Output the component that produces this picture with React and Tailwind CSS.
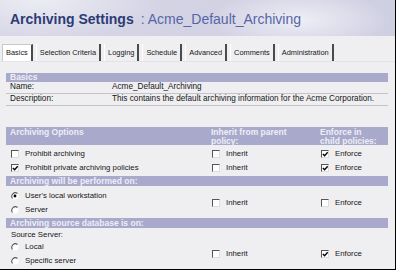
import React from 'react';

const Check = ({ on }) => (
  <span className="inline-block w-[8px] h-[8px] bg-white border-t border-l border-t-[#555] border-l-[#555] border-b border-r border-b-[#ddd] border-r-[#ddd] relative shrink-0">
    {on && (
      <svg viewBox="0 0 8 8" className="absolute left-0 top-0 w-[7px] h-[7px]">
        <path d="M1 3.5 L3 5.5 L6.5 1.5" stroke="#000" strokeWidth="1.6" fill="none" />
      </svg>
    )}
  </span>
);

const Radio = ({ on }) => (
  <svg viewBox="0 0 9 9" className="w-[8px] h-[8px] shrink-0">
    <circle cx="4.5" cy="4.5" r="4" fill="#fff" />
    <path d="M7.3 1.7 A4 4 0 0 0 1.7 7.3" stroke="#555" strokeWidth="1.2" fill="none" />
    {on && <circle cx="4.5" cy="4.5" r="1.6" fill="#000" />}
  </svg>
);

const Bar = ({ children, className = '' }) => (
  <div className={`bg-[#a9a9cc] text-[#eeeef6] font-bold text-[8.5px] leading-none pl-[4px] flex items-center ${className}`}>
    {children}
  </div>
);

const Opt = ({ children, kind = 'check', on, className = '' }) => (
  <div className={`flex items-center gap-[6px] ${className}`}>
    {kind === 'check' ? <Check on={on} /> : <Radio on={on} />}
    <span>{children}</span>
  </div>
);

const tabs = ['Basics', 'Selection Criteria', 'Logging', 'Schedule', 'Advanced', 'Comments', 'Administration'];

export default function App() {
  return (
    <div
      className="w-[396px] h-[270px] overflow-hidden bg-[#efeff1] border-r border-b border-black text-[#161616] text-[7.8px] leading-none"
      style={{ fontFamily: '"Liberation Sans", Arial, sans-serif' }}
    >
      {/* Header */}
      <div className="h-[36px] flex items-center pl-[10px] pt-[2px] bg-[radial-gradient(ellipse_90px_30px_at_300px_20px,#eeeef6,transparent),radial-gradient(ellipse_120px_40px_at_40px_0px,#ececf4,transparent),linear-gradient(90deg,#d6d6e6,#cfcfe2)]">
        <span className="text-[14px] font-bold text-[#2c3b76]">Archiving Settings</span>
        <span className="text-[14px] text-[#5666a6] ml-[7px]">: Acme_Default_Archiving</span>
      </div>

      {/* Tabs */}
      <div className="mt-[8px] h-[18px] flex items-stretch pl-[2px] border-b border-[#e4e4e8]">
        {tabs.map((t, i) => (
          <div
            key={t}
            className={`flex items-center px-[3px] mr-[3px] text-[7.4px] border-r-2 border-r-[#4a4a4a] ${
              i === 0 ? 'bg-white border-l border-t border-[#c8c8c8] border-r-[#4a4a4a]' : 'border-l border-l-white'
            }`}
          >
            {t}
          </div>
        ))}
      </div>

      <div className="px-[6px] mr-[1px]">
        {/* Basics */}
        <Bar className="mt-[11px] h-[9px]">Basics</Bar>
        <div className="flex items-center h-[12px] border-b border-[#c4c4c8] pl-[4px] text-[8.2px]">
          <span className="w-[102px]">Name:</span>
          <span>Acme_Default_Archiving</span>
        </div>
        <div className="flex items-center h-[12px] border-b border-[#c4c4c8] pl-[4px] text-[8.2px]">
          <span className="w-[102px]">Description:</span>
          <span>This contains the default archiving information for the Acme Corporation.</span>
        </div>

        {/* Options */}
        <div className="mt-[21px] bg-[#a9a9cc] text-[#eeeef6] font-bold text-[8.5px] leading-[9px] grid grid-cols-[201px_109px_1fr] pl-[4px] pt-[1px] h-[18px]">
          <span>Archiving Options</span>
          <span>Inherit from parent<br />policy:</span>
          <span>Enforce in<br />child policies:</span>
        </div>

        <div className="grid grid-cols-[201px_109px_1fr] pl-[5px] pt-[2px]">
          <div className="flex flex-col">
            <Opt className="h-[14px]" on={false}>Prohibit archiving</Opt>
            <Opt className="h-[14px]" on>Prohibit private archiving policies</Opt>
          </div>
          <div className="flex flex-col">
            <Opt className="h-[14px]" on={false}>Inherit</Opt>
            <Opt className="h-[14px]" on={false}>Inherit</Opt>
          </div>
          <div className="flex flex-col">
            <Opt className="h-[14px]" on>Enforce</Opt>
            <Opt className="h-[14px]" on>Enforce</Opt>
          </div>
        </div>

        <Bar className="mt-[1px] h-[10px]">Archiving will be performed on:</Bar>
        <div className="grid grid-cols-[201px_109px_1fr] pl-[5px] pt-[3px] items-center">
          <div className="flex flex-col">
            <Opt className="h-[14px]" kind="radio" on>User's local workstation</Opt>
            <Opt className="h-[14px]" kind="radio">Server</Opt>
          </div>
          <Opt on={false}>Inherit</Opt>
          <Opt on={false}>Enforce</Opt>
        </div>

        <Bar className="mt-[1px] h-[10px]">Archiving source database is on:</Bar>
        <div className="grid grid-cols-[201px_109px_1fr] pl-[5px] pt-[1px] items-center">
          <div className="flex flex-col">
            <span className="h-[11px] flex items-center">Source Server:</span>
            <Opt className="h-[14px]" kind="radio">Local</Opt>
            <Opt className="h-[14px]" kind="radio">Specific server</Opt>
          </div>
          <Opt className="mt-[10px]" on={false}>Inherit</Opt>
          <Opt className="mt-[10px]" on>Enforce</Opt>
        </div>
      </div>
    </div>
  );
}
